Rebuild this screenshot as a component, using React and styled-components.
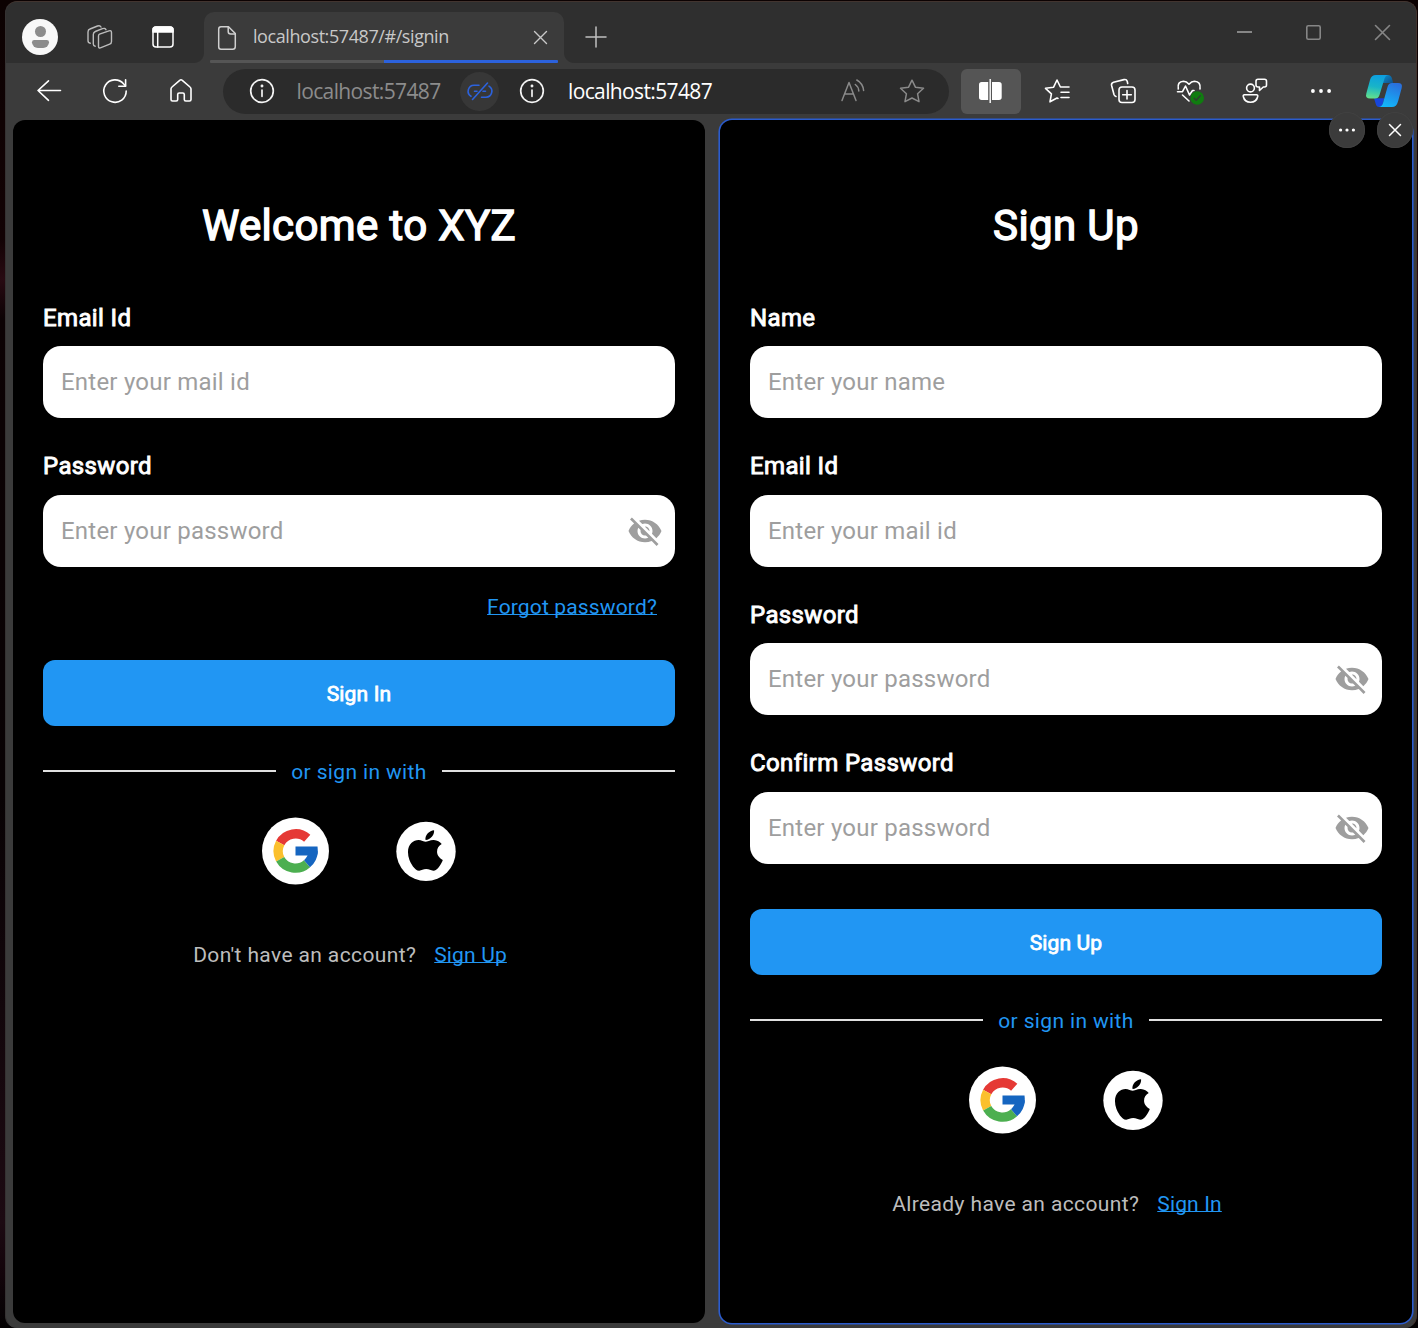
import React from "react";
import styled, { createGlobalStyle, css } from "styled-components";

const Global = createGlobalStyle`
  * { box-sizing: border-box; }
  html, body { margin: 0; height: 100%; overflow: hidden; }
  body {
    background: linear-gradient(180deg, #0c0202 0, #120204 18%, #280a12 21%, #0c0204 24%, #080204 60%, #1c0a12 92%, #12040a 96%, #030102 100%);
    font-family: Roboto, "Liberation Sans", sans-serif;
  }
  button, input { font: inherit; border: 0; padding: 0; background: none; color: inherit; }
`;

const BrowserWindow = styled.div`
  height: 1327px;
  margin: 1px 1px 0 5px;
  border: 1px solid #42342f;
  border-left-color: #353232;
  border-bottom-color: #3b3b3b;
  border-radius: 12px;
  overflow: hidden;
  background: #3b3b3b;
`;

const TitleBar = styled.header`
  display: flex;
  height: 61px;
  background: #2f2f2f;
  align-items: flex-start;
`;

const TitleSlot = styled.div`
  width: ${(p) => p.$w}px;
  height: ${(p) => p.$h || 70}px;
  display: flex;
  align-items: center;
  justify-content: center;
  flex: none;
`;

const Avatar = styled.div`
  width: 36px;
  height: 36px;
  border-radius: 50%;
  background: #f8f8f8;
  display: flex;
  flex-direction: column;
  align-items: center;
  padding-top: 7px;
  gap: 3px;
`;
const AvatarHead = styled.i`
  width: 11px;
  height: 11px;
  border-radius: 50%;
  background: #8c8c8c;
`;
const AvatarBody = styled.i`
  width: 17px;
  height: 8px;
  border-radius: 3px 3px 8px 8px;
  background: #8c8c8c;
`;

const Tab = styled.div`
  position: relative;
  width: 360px;
  height: 51px;
  margin: 10px 0 0 5px;
  padding: 0 6px;
  border-radius: 10px 10px 0 0;
  background: #3b3b3b;
  display: flex;
  flex-direction: column;
  &::before,
  &::after {
    content: "";
    position: absolute;
    bottom: 0;
    width: 10px;
    height: 10px;
  }
  &::before {
    left: -10px;
    background: radial-gradient(circle at 0 0, #2f2f2f 9.5px, #3b3b3b 10.5px);
  }
  &::after {
    right: -10px;
    background: radial-gradient(circle at 100% 0, #2f2f2f 9.5px, #3b3b3b 10.5px);
  }
`;
const TabRow = styled.div`
  display: flex;
  align-items: center;
  height: 48px;
  padding: 3px 11px 0 8px;
`;
const TabTitle = styled.span`
  flex: 1;
  margin-left: 17px;
  font: 400 18px/24px "Open Sans", "Noto Sans", sans-serif;
  letter-spacing: -0.42px;
  color: #c8c8c8;
  padding-bottom: 3px;
`;
const TabProgress = styled.div`
  height: 3px;
  border-radius: 1px;
  background: linear-gradient(90deg, #555 50%, #2c62dd 50%);
`;
const Spacer = styled.div`
  flex: 1;
`;

const Toolbar = styled.nav`
  display: flex;
  align-items: center;
  height: 57px;
  padding: 0 0 1px 10px;
`;
const ToolButton = styled.button`
  width: ${(p) => p.$w || 66}px;
  height: 45px;
  display: flex;
  align-items: center;
  justify-content: center;
  flex: none;
  color: #fff;
  ${(p) =>
    p.$active &&
    css`
      background: #555;
      border-radius: 6px;
      margin: 0 3px 0 12px;
    `}
`;
const AddressBar = styled.div`
  width: 726px;
  height: 45px;
  margin-left: 9px;
  padding: 0 24px 0 26px;
  border-radius: 23px;
  background: #2b2b2b;
  display: flex;
  align-items: center;
  flex: none;
  color: #f4f4f4;
`;
const Url = styled.span`
  width: 144px;
  margin: 0 ${(p) => p.$after || 0}px 0 ${(p) => p.$before}px;
  font: 400 21px/28px "Open Sans", "Noto Sans", sans-serif;
  letter-spacing: -0.63px;
  white-space: nowrap;
  flex: none;
  color: ${(p) => (p.$dim ? "#8c8c8c" : "#fff")};
`;
const LinkBadge = styled.div`
  width: 39px;
  height: 39px;
  margin-right: 20px;
  flex: none;
  border-radius: 50%;
  background: #373737;
  color: #2c62dd;
  display: flex;
  align-items: center;
  justify-content: center;
`;
const AddressActions = styled.div`
  display: flex;
  gap: 33px;
  margin-left: auto;
  color: #8a8a8a;
`;

const Panes = styled.main`
  display: flex;
  gap: 15px;
  padding-left: 7px;
`;
const Pane = styled.section`
  position: relative;
  width: 692px;
  height: 1203px;
  flex: none;
  border-radius: 12px;
  background: #000;
  padding: 76px 30px 0;
  ${(p) => p.$focused && "box-shadow: 0 0 0 1.6px #2b5cce;"}
`;
const PaneControls = styled.div`
  position: absolute;
  top: -8px;
  right: -1px;
  display: flex;
  gap: 12px;
`;
const RoundButton = styled.button`
  width: 36px;
  height: 36px;
  border-radius: 50%;
  background: #3b3b3b;
  box-shadow: inset 0 0 0 1px #414141;
  display: flex;
  align-items: center;
  justify-content: center;
  color: #fff;
`;

const Title = styled.h1`
  margin: 0 0 47.9px;
  text-align: center;
  font-weight: 400;
  font-size: 42px;
  line-height: 60px;
  letter-spacing: 0.375px;
  color: #fff;
  -webkit-text-stroke: 1.4px #fff;
`;
const Form = styled.form`
  display: flex;
  flex-direction: column;
`;
const Field = styled.label`
  display: flex;
  flex-direction: column;
  gap: 14.5px;
  & + & {
    margin-top: 34px;
  }
`;
const FieldLabel = styled.span`
  font-size: 24px;
  line-height: 28px;
  letter-spacing: 0.375px;
  color: #fff;
  -webkit-text-stroke: 0.9px #fff;
`;
const InputBox = styled.span`
  display: flex;
  align-items: center;
  height: 72px;
  padding: 0 12px 0 18px;
  border-radius: 18px;
  background: #fff;
`;
const Input = styled.input`
  flex: 1;
  min-width: 0;
  height: 40px;
  outline: none;
  font-size: 24px;
  letter-spacing: 0.225px;
  color: #222;
  &::placeholder {
    color: #9e9e9e;
    opacity: 1;
  }
`;
const TextLink = styled.a`
  font-size: 21px;
  line-height: 24px;
  letter-spacing: 0.15px;
  color: #2196f3;
  text-decoration: underline;
  text-decoration-thickness: 1px;
  text-decoration-skip-ink: none;
  text-underline-offset: 0px;
`;
const ForgotRow = styled.div`
  display: flex;
  justify-content: flex-end;
  height: 24px;
  margin: 28.1px 18px -4px 0;
`;
const Submit = styled.button`
  height: 66px;
  margin-top: 45px;
  border-radius: 12px;
  background: #2196f3;
  color: #fff;
  font-size: 21px;
  letter-spacing: 0.15px;
  padding-top: 2px;
  -webkit-text-stroke: 0.8px #fff;
`;
const Divider = styled.div`
  display: flex;
  align-items: center;
  gap: 15px;
  height: 24px;
  margin-top: 33px;
  color: #2196f3;
  font-size: 21px;
  letter-spacing: 0.36px;
  line-height: 24px;
  &::before,
  &::after {
    content: "";
    flex: 1;
    height: 1.5px;
    background: #e0e0e0;
  }
`;
const DividerText = styled.span`
  padding-top: 2px;
`;
const Socials = styled.div`
  display: flex;
  align-items: center;
  justify-content: center;
  gap: 67px;
  height: 68px;
  margin-top: 34px;
`;
const Footer = styled.p`
  display: flex;
  justify-content: center;
  gap: 18px;
  margin: 58px 0 0;
  padding-right: 18px;
  font-size: 21px;
  line-height: 24px;
  letter-spacing: 0.375px;
  color: #bdbdbd;
`;

const Svg = styled.svg`
  display: block;
  flex: none;
  overflow: visible;
`;
const Line = ({ w = 24, h = w, sw = 1.5, children }) => (
  <Svg width={w} height={h} viewBox={`0 0 ${w} ${h}`} fill="none" stroke="currentColor" strokeWidth={sw} strokeLinecap="round" strokeLinejoin="round">
    {children}
  </Svg>
);

const WorkspacesIcon = () => (
  <Line w={26} h={24} sw={1.4}>
    <path d="M12.500 9.200 22 5.800Q24.500 5 24.500 7.500V16.500Q24.500 18.500 22.700 19.200L14 22.700Q11.500 23.700 11.500 21.200V11Q11.500 9.700 12.500 9.200Z" />
    <path d="M8.200 21.200Q6.300 21 6.300 19V9.500Q6.300 7.300 8.300 6.500L15.500 3.700Q18.300 2.700 19 4.800" />
    <path d="M3.300 18.200Q1 18 1 15.500V7Q1 4.700 3 4L10.500 1Q13 0 14 2" />
  </Line>
);
const VerticalTabsIcon = () => (
  <Line w={22}>
    <rect x="1" y="1" width="20" height="20" rx="3" />
    <path d="M1 6V4Q1 1 4 1H18Q21 1 21 4V6Z" fill="currentColor" />
    <path d="M5.700 6V21" />
  </Line>
);
const PageIcon = () => (
  <Line w={18} h={24}>
    <path d="M3 .7H10.500L17.300 7.500V20.500Q17.300 23.300 14.700 23.300H3Q.7 23.300 .7 20.800V3.200Q.7 .7 3 .7Z" />
    <path d="M10.200 1V5.500Q10.200 8 12.700 8H17" />
  </Line>
);
const CrossIcon = ({ size = 12, sw = 1.5 }) => (
  <Line w={size} sw={sw}>
    <path d={`M.5 .5 ${size - 0.5} ${size - 0.5}M${size - 0.5} .5 .5 ${size - 0.5}`} />
  </Line>
);
const PlusIcon = () => (
  <Line w={20} sw={1.5}>
    <path d="M10 0V20M0 10H20" />
  </Line>
);
const BackIcon = () => (
  <Line w={24} h={22} sw={1.6}>
    <path d="M23.500 10.500H1M11.500 .8 1 10.500 11.500 20.300" />
  </Line>
);
const ReloadIcon = () => (
  <Line w={24} sw={1.6}>
    <path d="M23.200 12A11.200 11.200 0 1 1 20.500 4.800L22.500 7" />
    <path d="M22.600 .8V7.200H15.800" />
  </Line>
);
const HomeIcon = () => (
  <Line w={22} h={24} sw={1.6}>
    <path d="M1 10Q1 8.800 2 8L9.700 1.300Q11 .3 12.300 1.300L20 8Q21 8.800 21 10V20.500Q21 22 19.500 22H15.800Q14.300 22 14.300 20.500V15.500Q14.300 14 12.800 14H9.200Q7.700 14 7.700 15.500V20.500Q7.700 22 6.200 22H2.500Q1 22 1 20.500Z" />
  </Line>
);
const InfoIcon = () => (
  <Line w={26} sw={1.7}>
    <circle cx="13" cy="13" r="11.300" />
    <path d="M13 12V18.300" />
    <circle cx="13" cy="8" r=".6" fill="currentColor" />
  </Line>
);
const UnlinkIcon = () => (
  <Line w={26} h={18} sw={1.6}>
    <path d="M12 3.200H7A6 6 0 0 0 4 14.300M14.500 15.200H19A6 6 0 0 0 22 4.100M7.500 9.200H10M16 9.200H18.500M5.500 17.500 20.500 1" />
  </Line>
);
const ReadAloudIcon = () => (
  <Line w={26} h={26} sw={1.5}>
    <path d="M2 22.500 9 4.500 16 22.500M4.700 16H13.300" />
    <path d="M15.300 6.500Q18.600 8.800 18.800 13M16.800 2Q23 5.500 23.600 12.500" />
  </Line>
);
const StarIcon = () => (
  <Line w={26}>
    <path d="M13 2.200 16.400 9.200 24.500 10.300 18.600 15.800 20 23.700 13 20 6 23.700 7.400 15.800 1.500 10.300 9.600 9.200Z" />
  </Line>
);
const SplitIcon = () => (
  <Svg width="24" height="24" viewBox="0 0 24 24" fill="currentColor">
    <path d="M2.700 3H9.200V21H2.700Q0 21 0 18.300V5.700Q0 3 2.700 3ZM13 3H20Q22.700 3 22.700 5.700V18.300Q22.700 21 20 21H13Z" />
    <rect x="10.500" y="0" width="1.400" height="24" />
  </Svg>
);
const FavoritesIcon = () => (
  <Line w={26} sw={1.6}>
    <path d="M14 20.500 13 20 6 23.800 7.400 15.800 1.500 10.300 9.600 9.200 13 2 16.400 9H25M17 14.200H25M17 19.500H25" />
  </Line>
);
const CollectionsIcon = () => (
  <Line w={26} sw={1.6}>
    <rect x="9" y="9" width="16" height="15.500" rx="3" />
    <path d="M17 12.500V21M12.700 16.700H21.300" />
    <path d="M6 18.500Q4.500 18 4 16.500L1.600 7.500Q1 5 3.500 4.200L14 1.600Q16.500 1 17.200 3.300L17.700 5.500" />
  </Line>
);
const EssentialsIcon = () => (
  <Line w={26} h={24} sw={1.6}>
    <path d="M2.300 10Q1 2.500 7.500 2.200Q10.500 2.200 13 5.200Q15.500 2.200 18.500 2.200Q25 2.500 24 10" />
    <path d="M1.500 12.700H6.500L9.500 7 13.500 16 16.500 11.500H18M6.500 16 13 22" />
    <circle cx="21.200" cy="19" r="6.800" fill="#107c10" stroke="none" />
    <path d="M18.200 19.300 20.200 21.300 24.200 16.800" stroke="#303f30" strokeWidth="1.400" />
  </Line>
);
const FeedbackIcon = () => (
  <Line w={26} sw={1.6}>
    <circle cx="8.500" cy="10" r="3.900" />
    <path d="M2.500 16.800H14.500Q16 16.800 15.700 18.500Q14.500 24.200 8.500 24.200T1.300 18.500Q1 16.800 2.500 16.800Z" />
    <path d="M16 1.300H22.500Q24.500 1.300 24.500 3.300V7Q24.500 9 22.500 9H21.300L17.500 12.500V9H16Q14 9 14 7V3.300Q14 1.300 16 1.300Z" />
  </Line>
);
const DotsIcon = ({ w = 20, r = 1.9 }) => (
  <Svg width={w} height="6" viewBox={`0 0 ${w} 6`} fill="currentColor">
    <circle cx={r} cy="3" r={r} />
    <circle cx={w / 2} cy="3" r={r} />
    <circle cx={w - r} cy="3" r={r} />
  </Svg>
);
const CopilotIcon = () => (
  <Svg width="36" height="32" viewBox="0 0 36 32">
    <defs>
      <linearGradient id="cpA" x1=".5" y1="0" x2=".35" y2="1">
        <stop offset="0" stopColor="#0d9fe0" />
        <stop offset=".5" stopColor="#18b4c8" />
        <stop offset="1" stopColor="#62e08c" />
      </linearGradient>
      <linearGradient id="cpB" x1=".7" y1="0" x2=".3" y2="1">
        <stop offset="0" stopColor="#2a6fdc" />
        <stop offset="1" stopColor="#12b8fb" />
      </linearGradient>
      <linearGradient id="cpC" x1="0" y1="0" x2="1" y2="1">
        <stop offset="0" stopColor="#0a8ed0" />
        <stop offset="1" stopColor="#124d84" />
      </linearGradient>
    </defs>
    <path d="M17 0H22Q25 0 26 3.500L27.200 8H17Z" fill="url(#cpC)" />
    <path d="M8 23.200H18.300L17 28Q16 32 13 32Q10.500 32 9.800 29Z" fill="#1746dc" />
    <path d="M10 0H22Q19.500 .3 18.500 3.500L13.500 20Q12.500 23.500 9 23.500H4Q-1 23.500 .3 18.500L4 5Q5.300 0 10 0Z" fill="url(#cpA)" />
    <path d="M26 8H32Q37 8 35.700 13L32 26.500Q30.500 32 26 32H13Q16 31.500 17 28L21.500 12Q22.500 8 26 8Z" fill="url(#cpB)" />
  </Svg>
);
const MinimizeIcon = () => (
  <Line w={15} h={2} sw={1.8}>
    <path d="M0 1H15" strokeLinecap="butt" />
  </Line>
);
const MaximizeIcon = () => (
  <Line w={15} sw={1.6}>
    <rect x=".8" y=".8" width="13.400" height="13.400" rx="1.500" />
  </Line>
);
const EyeOffIcon = () => (
  <Svg width="36" height="36" viewBox="0 0 24 24" fill="#9e9e9e">
    <path d="M12 7c2.760 0 5 2.240 5 5 0 .65-.13 1.260-.36 1.830l2.920 2.920c1.510-1.260 2.700-2.890 3.430-4.750-1.730-4.390-6-7.500-11-7.500-1.400 0-2.740.25-3.980.7l2.160 2.160C10.740 7.130 11.350 7 12 7zM2 4.270l2.280 2.280.46.46C3.080 8.300 1.780 10.020 1 12c1.730 4.390 6 7.500 11 7.500 1.550 0 3.030-.3 4.380-.84l.42.42L19.730 22 21 20.730 3.270 3 2 4.270zM7.530 9.800l1.550 1.550c-.05.21-.08.43-.08.65 0 1.660 1.340 3 3 3 .22 0 .44-.03.65-.08l1.550 1.550c-.67.33-1.410.53-2.200.53-2.760 0-5-2.240-5-5 0-.79.2-1.530.53-2.200zm4.310-.78l3.150 3.150.02-.16c0-1.660-1.340-3-3-3l-.17.01z" />
  </Svg>
);
const GoogleLogo = () => (
  <Svg width="67" height="68" viewBox="0 0 67 68">
    <circle cx="33.500" cy="34" r="33.500" fill="#fff" />
    <g fill="none" strokeWidth="9.300" transform="translate(.2 .5)">
      <path d="M45 20.800A17.400 17.400 0 0 0 18 25.500" stroke="#e53935" />
      <path d="M18 25.500A17.400 17.400 0 0 0 18 41.800" stroke="#fbc02d" />
      <path d="M18 41.800A17.400 17.400 0 0 0 44.800 46.200" stroke="#4caf50" />
      <path d="M44.800 46.200A17.400 17.400 0 0 0 51 33.500" stroke="#1565c0" />
    </g>
    <path d="M33.500 29.500H55.500Q56 33.500 55.500 37.500L46 38.500H33.500Z" fill="#1565c0" />
  </Svg>
);
const AppleLogo = () => (
  <Svg width="60" height="60" viewBox="0 0 60 60">
    <circle cx="30" cy="30.400" r="29.700" fill="#fff" />
    <g transform="translate(11.600 6.300) scale(.0925 .0905)">
      <path d="M318.700 268.700c-.2-36.700 16.400-64.400 50-84.800-18.800-26.900-47.200-41.700-84.700-44.600-35.500-2.800-74.300 20.700-88.500 20.700-15 0-49.400-19.700-76.400-19.700C63.300 141.200 4 184.800 4 273.500q0 39.300 14.400 81.200c12.800 36.700 59 126.700 107.200 125.200 25.200-.6 43-17.900 75.800-17.900 31.800 0 48.300 17.900 76.400 17.900 48.600-.7 90.400-82.500 102.600-119.300-65.200-30.700-61.700-90-61.700-91.900zm-56.600-164.200c27.300-32.400 24.800-61.900 24-72.500-24.100 1.400-52 16.400-67.900 34.900-17.500 19.800-27.800 44.300-25.600 71.900 26.100 2 49.900-11.400 69.500-34.300z" fill="#000" />
    </g>
  </Svg>
);

const TextField = ({ label, placeholder, secret }) => (
  <Field>
    <FieldLabel>{label}</FieldLabel>
    <InputBox>
      <Input type={secret ? "password" : "text"} placeholder={placeholder} />
      {secret && <EyeOffIcon />}
    </InputBox>
  </Field>
);

const AuthPane = ({ title, fields, forgot, action, question, link, focused }) => (
  <Pane $focused={focused}>
    {focused && (
      <PaneControls>
        <RoundButton><DotsIcon w={16} r={1.6} /></RoundButton>
        <RoundButton><CrossIcon size={12} sw={1.5} /></RoundButton>
      </PaneControls>
    )}
    <Title>{title}</Title>
    <Form>
      {fields.map((f) => (
        <TextField key={f.label} {...f} />
      ))}
      {forgot && (
        <ForgotRow>
          <TextLink>Forgot password?</TextLink>
        </ForgotRow>
      )}
      <Submit type="button">{action}</Submit>
    </Form>
    <Divider><DividerText>or sign in with</DividerText></Divider>
    <Socials>
      <GoogleLogo />
      <AppleLogo />
    </Socials>
    <Footer>
      {question}
      <TextLink>{link}</TextLink>
    </Footer>
  </Pane>
);

const IconTint = styled.span`
  color: ${(p) => p.$c};
  display: flex;
`;

const email = { label: "Email Id", placeholder: "Enter your mail id" };
const password = { label: "Password", placeholder: "Enter your password", secret: true };

export default function App() {
  return (
    <>
      <Global />
      <BrowserWindow>
        <TitleBar>
          <TitleSlot $w={68}>
            <Avatar><AvatarHead /><AvatarBody /></Avatar>
          </TitleSlot>
          <TitleSlot $w={52}><IconTint $c="#bcbcbc"><WorkspacesIcon /></IconTint></TitleSlot>
          <TitleSlot $w={73}><IconTint $c="#fff"><VerticalTabsIcon /></IconTint></TitleSlot>
          <Tab>
            <TabRow>
              <IconTint $c="#d0d0d0"><PageIcon /></IconTint>
              <TabTitle>localhost:57487/#/signin</TabTitle>
              <IconTint $c="#c8c8c8"><CrossIcon size={13} sw={1.4} /></IconTint>
            </TabRow>
            <TabProgress />
          </Tab>
          <TitleSlot $w={64} $h={69}><IconTint $c="#c0c0c0"><PlusIcon /></IconTint></TitleSlot>
          <Spacer />
          <TitleSlot $w={69} $h={60}><IconTint $c="#868686"><MinimizeIcon /></IconTint></TitleSlot>
          <TitleSlot $w={69} $h={60}><IconTint $c="#868686"><MaximizeIcon /></IconTint></TitleSlot>
          <TitleSlot $w={68} $h={60}><IconTint $c="#868686"><CrossIcon size={15} sw={1.6} /></IconTint></TitleSlot>
        </TitleBar>
        <Toolbar>
          <ToolButton><BackIcon /></ToolButton>
          <ToolButton><ReloadIcon /></ToolButton>
          <ToolButton><HomeIcon /></ToolButton>
          <AddressBar>
            <InfoIcon />
            <Url $dim $before={21.5} $after={19.5}>localhost:57487</Url>
            <LinkBadge><UnlinkIcon /></LinkBadge>
            <InfoIcon />
            <Url $before={23}>localhost:57487</Url>
            <AddressActions>
              <ReadAloudIcon />
              <StarIcon />
            </AddressActions>
          </AddressBar>
          <ToolButton $w={60} $active><SplitIcon /></ToolButton>
          <ToolButton><FavoritesIcon /></ToolButton>
          <ToolButton><CollectionsIcon /></ToolButton>
          <ToolButton><EssentialsIcon /></ToolButton>
          <ToolButton><FeedbackIcon /></ToolButton>
          <ToolButton><DotsIcon /></ToolButton>
          <ToolButton $w={60}><CopilotIcon /></ToolButton>
        </Toolbar>
        <Panes>
          <AuthPane title="Welcome to XYZ" fields={[email, password]} forgot action="Sign In" question="Don't have an account?" link="Sign Up" />
          <AuthPane
            focused
            title="Sign Up"
            fields={[
              { label: "Name", placeholder: "Enter your name" },
              email,
              password,
              { ...password, label: "Confirm Password" },
            ]}
            action="Sign Up"
            question="Already have an account?"
            link="Sign In"
          />
        </Panes>
      </BrowserWindow>
    </>
  );
}
